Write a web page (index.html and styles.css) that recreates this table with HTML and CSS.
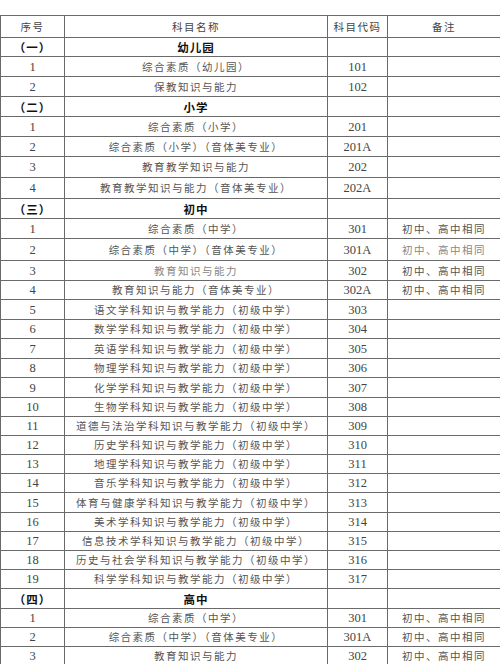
FILE: index.html
```html
<!DOCTYPE html>
<html lang="zh">
<head>
<meta charset="utf-8">
<title>科目表</title>
<link rel="stylesheet" href="styles.css">
</head>
<body>
<table class="subjects">
  <colgroup>
    <col class="c-no"><col class="c-name"><col class="c-code"><col class="c-note">
  </colgroup>
  <thead>
    <tr class="head"><th>序号</th><th>科目名称</th><th>科目代码</th><th>备注</th></tr>
  </thead>
  <tbody>
    <tr class="sec h19"><td>（一）</td><td>幼儿园</td><td></td><td></td></tr>
    <tr class="h20"><td class="num">1</td><td>综合素质（幼儿园）</td><td class="num">101</td><td></td></tr>
    <tr class="h20"><td class="num">2</td><td>保教知识与能力</td><td class="num">102</td><td></td></tr>
    <tr class="sec h20"><td>（二）</td><td>小学</td><td></td><td></td></tr>
    <tr class="h20"><td class="num">1</td><td>综合素质（小学）</td><td class="num">201</td><td></td></tr>
    <tr class="h20"><td class="num">2</td><td>综合素质（小学）（音体美专业）</td><td class="num">201A</td><td></td></tr>
    <tr class="h21"><td class="num">3</td><td>教育教学知识与能力</td><td class="num">202</td><td></td></tr>
    <tr class="h21"><td class="num">4</td><td>教育教学知识与能力（音体美专业）</td><td class="num">202A</td><td></td></tr>
    <tr class="sec h20"><td>（三）</td><td>初中</td><td></td><td></td></tr>
    <tr class="h20"><td class="num">1</td><td>综合素质（中学）</td><td class="num">301</td><td>初中、高中相同</td></tr>
    <tr class="h22"><td class="num">2</td><td>综合素质（中学）（音体美专业）</td><td class="num">301A</td><td class="light">初中、高中相同</td></tr>
    <tr class="h20"><td class="num">3</td><td class="light">教育知识与能力</td><td class="num">302</td><td>初中、高中相同</td></tr>
    <tr class="h19"><td class="num">4</td><td>教育知识与能力（音体美专业）</td><td class="num">302A</td><td>初中、高中相同</td></tr>
    <tr class="h20"><td class="num">5</td><td>语文学科知识与教学能力（初级中学）</td><td class="num">303</td><td></td></tr>
    <tr class="h19"><td class="num">6</td><td>数学学科知识与教学能力（初级中学）</td><td class="num">304</td><td></td></tr>
    <tr class="h20"><td class="num">7</td><td>英语学科知识与教学能力（初级中学）</td><td class="num">305</td><td></td></tr>
    <tr class="h19"><td class="num">8</td><td>物理学科知识与教学能力（初级中学）</td><td class="num">306</td><td></td></tr>
    <tr class="h20"><td class="num">9</td><td>化学学科知识与教学能力（初级中学）</td><td class="num">307</td><td></td></tr>
    <tr class="h19"><td class="num">10</td><td>生物学科知识与教学能力（初级中学）</td><td class="num">308</td><td></td></tr>
    <tr class="h19"><td class="num">11</td><td>道德与法治学科知识与教学能力（初级中学）</td><td class="num">309</td><td></td></tr>
    <tr class="h19"><td class="num">12</td><td>历史学科知识与教学能力（初级中学）</td><td class="num">310</td><td></td></tr>
    <tr class="h19"><td class="num">13</td><td>地理学科知识与教学能力（初级中学）</td><td class="num">311</td><td></td></tr>
    <tr class="h19"><td class="num">14</td><td>音乐学科知识与教学能力（初级中学）</td><td class="num">312</td><td></td></tr>
    <tr class="h20"><td class="num">15</td><td>体育与健康学科知识与教学能力（初级中学）</td><td class="num">313</td><td></td></tr>
    <tr class="h19"><td class="num">16</td><td>美术学科知识与教学能力（初级中学）</td><td class="num">314</td><td></td></tr>
    <tr class="h19"><td class="num">17</td><td>信息技术学科知识与教学能力（初级中学）</td><td class="num">315</td><td></td></tr>
    <tr class="h19"><td class="num">18</td><td>历史与社会学科知识与教学能力（初级中学）</td><td class="num">316</td><td></td></tr>
    <tr class="h19"><td class="num">19</td><td>科学学科知识与教学能力（初级中学）</td><td class="num">317</td><td></td></tr>
    <tr class="sec h20"><td>（四）</td><td>高中</td><td></td><td></td></tr>
    <tr class="h19"><td class="num">1</td><td>综合素质（中学）</td><td class="num">301</td><td>初中、高中相同</td></tr>
    <tr class="h19"><td class="num">2</td><td>综合素质（中学）（音体美专业）</td><td class="num">301A</td><td>初中、高中相同</td></tr>
    <tr class="h19"><td class="num">3</td><td>教育知识与能力</td><td class="num">302</td><td>初中、高中相同</td></tr>
  </tbody>
</table>
</body>
</html>
```
FILE: styles.css
```css
html, body {
  margin: 0;
  padding: 0;
  background: #ffffff;
}
body {
  padding-top: 15px;
  font-family: "Noto Sans CJK SC", "Liberation Serif", serif;
  color: #555;
}
.subjects {
  border-collapse: collapse;
  table-layout: fixed;
  width: 500px;
  margin: 0;
}
.c-no { width: 64px; }
.c-name { width: 263px; }
.c-code { width: 60px; }
.c-note { width: 113px; }
.subjects th,
.subjects td {
  border: 1px solid #6a6a6a;
  padding: 0;
  text-align: center;
  vertical-align: middle;
  font-size: 10.5px;
  letter-spacing: 1.5px;
  line-height: 12px;
  font-weight: 400;
  white-space: nowrap;
  overflow: hidden;
}
.subjects th {
  color: #444;
}
.head { height: 22px; }
.h19 { height: 19px; }
.h20 { height: 20px; }
.h21 { height: 21px; }
.h22 { height: 22px; }
.sec td {
  font-weight: 700;
  color: #111;
  font-size: 11.5px;
  letter-spacing: 1px;
}
.subjects td.num {
  font-family: "Liberation Serif", serif;
  font-size: 12.5px;
  letter-spacing: 0;
  color: #444;
}
.subjects td.light {
  color: #888;
}
```
